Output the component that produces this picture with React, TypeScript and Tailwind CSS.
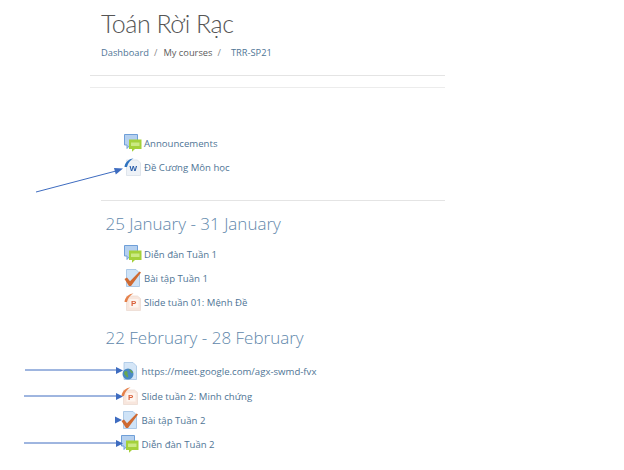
import type { ReactNode } from 'react';

type IconKind = 'forum' | 'word' | 'assign' | 'ppt' | 'url';

function IconArt({ kind }: { kind: IconKind }) {
  if (kind === 'forum') {
    return (
      <>
        <path d="M0.500 0.500h13v10.500H6L3 14.500V11H0.500z" fill="#b5d0ef" stroke="#6f9fd8" strokeWidth="1" />
        <path d="M5 5.500h12.500v9.500H11l-3 2.800V15H5z" fill="#a4d13a" />
        <path d="M7 8.500h8.500v3.500H7z" fill="#cbe983" />
      </>
    );
  }
  if (kind === 'word') {
    return (
      <>
        <path d="M2.500 2h11l3 3v12.500h-14z" fill="#eef2f7" stroke="#d9e0e8" strokeWidth="0.8" />
        <path d="M0.500 9C1 4.500 4.500 0.800 9.500 0.500 6.500 2 4 4.800 3 9z" fill="#2f73c0" />
        <text x="5.500" y="13" fontSize="8" fontWeight="700" fill="#2459a8" fontFamily="Liberation Sans, sans-serif">W</text>
      </>
    );
  }
  if (kind === 'assign') {
    return (
      <>
        <path d="M2.500 0.500h9.500l3.500 3.500v13.500H2.500z" fill="#cfe3f7" stroke="#9dbfe2" strokeWidth="0.8" />
        <path d="M0.500 10l2.500-1.500 3 3.800L15.500 2.500l1.500 1-10 13.500H5z" fill="#cf6a32" />
      </>
    );
  }
  if (kind === 'ppt') {
    return (
      <>
        <path d="M2.500 3h11l3 2.500v12h-14z" fill="#f8e6dd" stroke="#ecdcd3" strokeWidth="0.8" />
        <path d="M0.500 9C1 4.500 4.500 0.800 9.500 0.500 6.500 2 4 4.800 3 9z" fill="#e5804a" />
        <rect x="5.500" y="6" width="9" height="8.500" fill="#fdf5f0" />
        <text x="7" y="13" fontSize="8" fontWeight="700" fill="#d9603a" fontFamily="Liberation Sans, sans-serif">P</text>
      </>
    );
  }
  return (
    <>
      <path d="M3 0.500h9L15.500 4v13.500H3z" fill="#d5e6f7" stroke="#a6c5e4" strokeWidth="0.8" />
      <circle cx="7" cy="12" r="5.500" fill="#4b8ac4" />
      <path d="M3.500 9.500c2-1.500 3.500 0 3 1.500S8 13 7 15.500C5 15 4.500 13 3.500 12.500 3 11.500 3 10.500 3.500 9.500zM8 7.500c2 0 3.500 1.500 4 3.500-2 .5-2.500-1.500-4-3.500z" fill="#6aa84f" />
    </>
  );
}

function Row({ kind, iconX, gap, top, children }: { kind: IconKind; iconX: string; gap: string; top: string; children: ReactNode }) {
  return (
    <div className={`flex h-[18px] items-center ${iconX} ${gap} ${top}`}>
      <svg className="blur-[0.4px]" width="18" height="18" viewBox="0 0 18 18">
        <IconArt kind={kind} />
      </svg>
      <span className="whitespace-nowrap pt-[2px] text-[9.6px] leading-none text-[#4f7596]">{children}</span>
    </div>
  );
}

export default function App() {
  return (
    <div className="relative h-[470px] w-[624px] overflow-hidden bg-white font-['Open_Sans',sans-serif]">
      <div className="ml-[90px] w-[355px]">
        <h1 className="pl-[11px] pt-[8px] font-['Lato',sans-serif] text-[25px] font-light leading-[31px] tracking-[-0.5px] text-[#555555]">Toán Rời Rạc</h1>

        {/* Breadcrumb */}
        <div className="mt-[7px] flex h-[14px] items-center pl-[11px] text-[9.3px] leading-none">
          <span className="text-[#4f7596]">Dashboard</span>
          <span className="ml-[5px] text-[#8a8a8a]">/</span>
          <span className="ml-[6px] text-[#5c5c5c]">My courses</span>
          <span className="ml-[5px] text-[#8a8a8a]">/</span>
          <span className="ml-[10px] text-[#4f7596]">TRR-SP21</span>
        </div>

        <div className="mt-[15px] h-px bg-[#e4e4e4]" />
        <div className="mt-[11px] h-px bg-[#ececec]" />

        {/* Top section */}
        <Row kind="forum" iconX="ml-[34px]" gap="gap-[2px]" top="mt-[46px]">Announcements</Row>
        <Row kind="word" iconX="ml-[34px]" gap="gap-[2px]" top="mt-[6px]">Đề Cương Môn học</Row>
        <div className="ml-[11px] mt-[24px] h-px bg-[#e4e4e4]" />

        {/* Week 1 */}
        <h2 className="ml-[15.500px] mt-[12px] text-[17px] font-light leading-[22px] text-[#5f88ab]">25 January - 31 January</h2>
        <Row kind="forum" iconX="ml-[34px]" gap="gap-[2px]" top="mt-[10px]">Diễn đàn Tuần 1</Row>
        <Row kind="assign" iconX="ml-[34px]" gap="gap-[2px]" top="mt-[6px]">Bài tập Tuần 1</Row>
        <Row kind="ppt" iconX="ml-[34px]" gap="gap-[2px]" top="mt-[6px]">Slide tuần 01: Mệnh Đề</Row>

        {/* Week 2 */}
        <h2 className="ml-[15.500px] mt-[16px] text-[17px] font-light leading-[22px] text-[#5f88ab]">22 February - 28 February</h2>
        <Row kind="url" iconX="ml-[31px]" gap="gap-[2.500px]" top="mt-[13px]">https://meet.google.com/agx-swmd-fvx</Row>
        <Row kind="ppt" iconX="ml-[31px]" gap="gap-[2.500px]" top="mt-[7px]">Slide tuần 2: Minh chứng</Row>
        <Row kind="assign" iconX="ml-[31px]" gap="gap-[2.500px]" top="mt-[6px]">Bài tập Tuần 2</Row>
        <Row kind="forum" iconX="ml-[31px]" gap="gap-[2.500px]" top="mt-[6px]">Diễn đàn Tuần 2</Row>
      </div>

      {/* Hand-drawn annotation arrows over the page */}
      <svg className="pointer-events-none absolute left-0 top-0" width="624" height="470" viewBox="0 0 624 470">
        <g stroke="#3e6cc0" strokeWidth="1" fill="#3e6cc0">
          <path d="M36 192L116 171" />
          <path d="M123 168.500l-9-.5 1.800 6.500z" stroke="none" />
          <path d="M25 370H118" />
          <path d="M123 370.500l-7-3.500v7z" stroke="none" />
          <path d="M24 396H118" />
          <path d="M123 396.500l-7-3.500v7z" stroke="none" />
          <path d="M115 416.500v7l7-3.500z" stroke="none" />
          <path d="M24 443H118" />
          <path d="M123 443.500l-7-3.500v7z" stroke="none" />
        </g>
      </svg>
    </div>
  );
}
